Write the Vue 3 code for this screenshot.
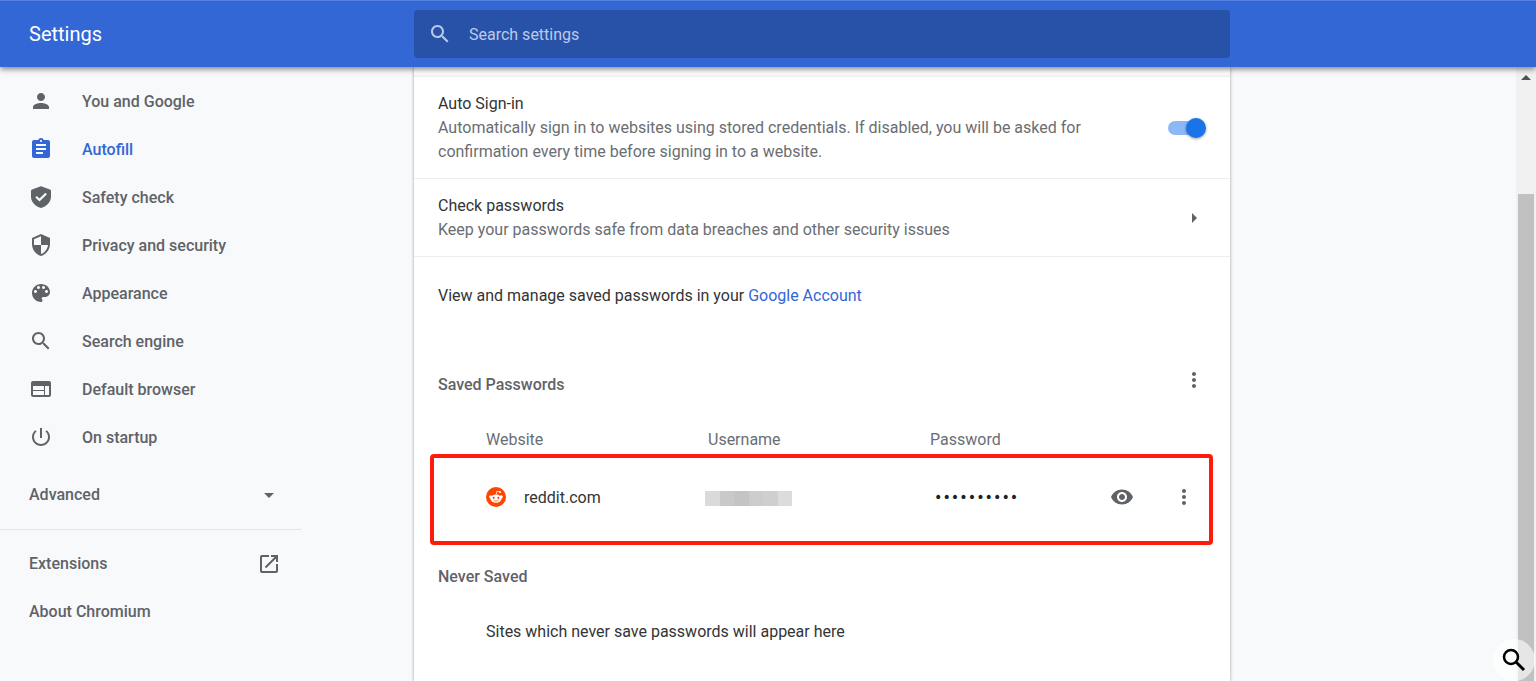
<script setup>
import { ref } from 'vue'

const query = ref('')
const autoSignIn = ref(true)
const password = ref('passw0rd12')

const menu = [
  { label: 'You and Google', icon: 'M12 12c2.21 0 4-1.79 4-4s-1.79-4-4-4-4 1.79-4 4 1.79 4 4 4zm0 2c-2.67 0-8 1.34-8 4v2h16v-2c0-2.66-5.33-4-8-4z' },
  { label: 'Autofill', active: true, icon: 'M19 3h-4.18C14.4 1.84 13.3 1 12 1c-1.3 0-2.4.84-2.82 2H5c-1.1 0-2 .9-2 2v14c0 1.1.9 2 2 2h14c1.1 0 2-.9 2-2V5c0-1.1-.9-2-2-2zm-7 0c.55 0 1 .45 1 1s-.45 1-1 1-1-.45-1-1 .45-1 1-1zm2 14H7v-2h7v2zm3-4H7v-2h10v2zm0-4H7V7h10v2z' },
  { label: 'Safety check', icon: 'M11.3 1.5 3 4.6C2.4 4.8 2 5.4 2 6v5.6c0 5.200 3.900 9.700 10 11.400 6.100-1.700 10-6.200 10-11.400V6c0-.6-.4-1.200-1-1.400l-8.300-3.100c-.5-.2-.9-.2-1.400 0zM10.500 16.600 6.300 12.400l1.500-1.500 2.700 2.700 5.900-5.900 1.500 1.500z' },
  { label: 'Privacy and security', icon: 'M12 1L3 5v6c0 5.550 3.840 10.740 9 12 5.160-1.260 9-6.450 9-12V5l-9-4zm0 10.990h7c-.53 4.120-3.280 7.790-7 8.940V12H5V6.300l7-3.110v8.800z' },
  { label: 'Appearance', icon: 'M12 3c-4.970 0-9 4.030-9 9s4.030 9 9 9c.83 0 1.500-.67 1.500-1.500 0-.39-.15-.74-.39-1.010-.23-.26-.38-.61-.38-.99 0-.83.67-1.500 1.500-1.500H16c2.760 0 5-2.240 5-5 0-4.420-4.030-8-9-8zm-5.500 9c-.83 0-1.500-.67-1.500-1.500S5.670 9 6.500 9 8 9.670 8 10.500 7.330 12 6.500 12zm3-4C8.670 8 8 7.330 8 6.500S8.670 5 9.500 5s1.500.67 1.500 1.500S10.330 8 9.500 8zm5 0c-.83 0-1.500-.67-1.500-1.500S13.670 5 14.500 5s1.500.67 1.500 1.500S15.330 8 14.500 8zm3 4c-.83 0-1.500-.67-1.500-1.500S16.670 9 17.500 9s1.500.67 1.500 1.500-.67 1.500-1.500 1.500z' },
  { label: 'Search engine', icon: 'M15.500 14h-.79l-.28-.27C15.410 12.590 16 11.110 16 9.500 16 5.910 13.090 3 9.500 3S3 5.910 3 9.500 5.910 16 9.500 16c1.610 0 3.090-.59 4.230-1.570l.27.28v.79l5 4.990L20.490 19l-4.990-5zm-6 0C7.010 14 5 11.990 5 9.500S7.010 5 9.500 5 14 7.010 14 9.500 11.990 14 9.500 14z' },
  { label: 'Default browser', icon: 'M20 4H4c-1.100 0-1.990.9-1.990 2L2 18c0 1.100.9 2 2 2h16c1.100 0 2-.9 2-2V6c0-1.100-.9-2-2-2zm-5 14H4v-4h11v4zm0-5H4V9h11v4zm5 5h-4V9h4v9z' },
  { label: 'On startup', icon: 'M13 3h-2v10h2V3zm4.830 2.170l-1.420 1.420C17.990 7.860 19 9.810 19 12c0 3.870-3.130 7-7 7s-7-3.130-7-7c0-2.190 1.010-4.140 2.580-5.420L6.170 5.170C4.230 6.820 3 9.260 3 12c0 4.970 4.030 9 9 9s9-4.030 9-9c0-2.740-1.230-5.180-3.170-6.830z' }
]
const searchPath = menu[5].icon
const dotsPath = 'M12 8c1.100 0 2-.9 2-2s-.9-2-2-2-2 .9-2 2 .9 2 2 2zm0 2c-1.100 0-2 .9-2 2s.9 2 2 2 2-.9 2-2-.9-2-2-2zm0 6c-1.100 0-2 .9-2 2s.9 2 2 2 2-.9 2-2-.9-2-2-2z'
</script>

<template>
  <div class="page">
    <header class="toolbar">
      <h1>Settings</h1>
      <label class="search">
        <svg class="icon" viewBox="0 0 24 24" aria-hidden="true"><path :d="searchPath" /></svg>
        <input v-model="query" type="text" placeholder="Search settings" aria-label="Search settings" />
      </label>
    </header>

    <div class="content">
      <aside class="sidebar">
        <nav>
          <a v-for="item in menu" :key="item.label" href="#" class="item" :class="{ active: item.active }">
            <svg class="icon" viewBox="0 0 24 24" aria-hidden="true"><path fill-rule="evenodd" :d="item.icon" /></svg>
            <span>{{ item.label }}</span>
          </a>
        </nav>
        <button type="button" class="item spread advanced">
          <span>Advanced</span>
          <svg class="icon" viewBox="0 0 24 24" aria-hidden="true"><path d="M7 10l5 5 5-5z" /></svg>
        </button>
        <div class="more">
          <a href="#" class="item spread">
            <span>Extensions</span>
            <svg class="icon" viewBox="0 0 24 24" aria-hidden="true"><path d="M19 19H5V5h7V3H5c-1.110 0-2 .9-2 2v14c0 1.100.89 2 2 2h14c1.100 0 2-.9 2-2v-7h-2v7zM14 3v2h3.590l-9.830 9.830 1.410 1.410L19 6.410V10h2V3h-7z" /></svg>
          </a>
          <a href="#" class="item">About Chromium</a>
        </div>
      </aside>

      <main class="card">
        <div class="row first">
          <label class="text" for="auto-signin">
            Auto Sign-in
            <span class="sub">Automatically sign in to websites using stored credentials. If disabled, you will be asked for confirmation every time before signing in to a website.</span>
          </label>
          <input id="auto-signin" v-model="autoSignIn" type="checkbox" class="toggle" />
        </div>
        <div class="row">
          <div class="text">
            Check passwords
            <span class="sub">Keep your passwords safe from data breaches and other security issues</span>
          </div>
          <button type="button" class="icon-button" aria-label="Check passwords">
            <svg class="icon" viewBox="0 0 24 24" aria-hidden="true"><path d="M10 7l5 5-5 5z" /></svg>
          </button>
        </div>
        <p class="manage">View and manage saved passwords in your <a href="#">Google Account</a></p>

        <div class="section-head">
          <h2>Saved Passwords</h2>
          <button type="button" class="icon-button" aria-label="More actions">
            <svg class="icon" viewBox="0 0 24 24" aria-hidden="true"><path :d="dotsPath" /></svg>
          </button>
        </div>

        <div class="saved">
          <table>
            <thead>
              <tr><th>Website</th><th>Username</th><th class="wide">Password</th></tr>
            </thead>
            <tbody>
              <tr>
                <td>
                  <div class="site">
                    <svg class="reddit" viewBox="0 0 20 20" aria-hidden="true">
                      <circle cx="10" cy="10" r="10" fill="#ff4500" />
                      <path d="M10.200 7.500 11 4.200l2.900.6" fill="none" stroke="#fff" stroke-width=".8" />
                      <circle cx="14" cy="5" r="1.100" fill="#fff" />
                      <circle cx="4.700" cy="9.800" r="1.500" fill="#fff" />
                      <circle cx="15.300" cy="9.800" r="1.500" fill="#fff" />
                      <ellipse cx="10" cy="11.600" rx="5.600" ry="4.200" fill="#fff" />
                      <circle cx="7.700" cy="10.800" r="1.100" fill="#ff4500" />
                      <circle cx="12.300" cy="10.800" r="1.100" fill="#ff4500" />
                      <path d="M7.700 13.400c1.300 1 3.300 1 4.600 0" fill="none" stroke="#ff4500" stroke-width=".7" stroke-linecap="round" />
                    </svg>
                    <span>reddit.com</span>
                  </div>
                </td>
                <td>
                  <div class="mosaic" role="img" aria-label="Hidden username"><i></i><i></i><i></i><i></i><i></i><i></i></div>
                </td>
                <td>
                  <div class="secret">
                    <input v-model="password" type="password" readonly aria-label="Password for reddit.com" />
                    <button type="button" class="icon-button" aria-label="Show password">
                      <svg class="icon" viewBox="0 0 24 24" aria-hidden="true"><path d="M12 4.500C7 4.500 2.730 7.610 1 12c1.730 4.390 6 7.500 11 7.500s9.270-3.110 11-7.500c-1.730-4.390-6-7.500-11-7.500zM12 17c-2.760 0-5-2.240-5-5s2.240-5 5-5 5 2.240 5 5-2.240 5-5 5zm0-8c-1.660 0-3 1.340-3 3s1.340 3 3 3 3-1.340 3-3-1.340-3-3-3z" /></svg>
                    </button>
                    <button type="button" class="icon-button" aria-label="More actions for reddit.com">
                      <svg class="icon" viewBox="0 0 24 24" aria-hidden="true"><path :d="dotsPath" /></svg>
                    </button>
                  </div>
                </td>
              </tr>
            </tbody>
          </table>
          <div class="highlight"></div>
        </div>

        <h2 class="never">Never Saved</h2>
        <p class="empty">Sites which never save passwords will appear here</p>
      </main>

      <div class="scrollbar" aria-hidden="true">
        <div class="arrow"></div>
        <div class="thumb"></div>
      </div>
    </div>

    <button type="button" class="lens" aria-label="Zoom">
      <svg viewBox="0 0 24 24" aria-hidden="true">
        <circle cx="9" cy="9" r="7" fill="none" stroke="#000" stroke-width="2.500" />
        <path d="M14 14l8 8" stroke="#000" stroke-width="3" />
      </svg>
    </button>
  </div>
</template>

<style>
body {
  margin: 0;
  background: #f8f9fb;
}
</style>

<style scoped>
.page {
  position: relative;
  display: flex;
  flex-direction: column;
  height: 100vh;
  overflow: hidden;
  font: 400 16px/24px Roboto, "Liberation Sans", sans-serif;
  color: #333436;
}
.page * {
  box-sizing: border-box;
}
h1, h2, p {
  margin: 0;
}
button, input {
  font: inherit;
  color: inherit;
  border: 0;
  padding: 0;
  background: none;
}
a {
  color: #3367d6;
  text-decoration: none;
}
.icon {
  flex: none;
  display: block;
  width: 24px;
  height: 24px;
  fill: currentColor;
}
.toolbar {
  position: relative;
  z-index: 1;
  display: grid;
  grid-template-columns: 414px minmax(0, 816px);
  align-items: center;
  padding: 9px 0;
  background: #3367d6;
  border-top: 1px solid #5480dd;
  box-shadow: 0 2px 6px rgba(0, 0, 0, 0.5);
  color: #fff;
}
h1 {
  padding-left: 29px;
  font-size: 20px;
  font-weight: 400;
}
.search {
  display: flex;
  align-items: center;
  gap: 17px;
  height: 48px;
  padding: 0 16px 0 14px;
  border-radius: 4px;
  background: #2851a8;
  color: #bccaea;
}
.search input {
  flex: 1;
  min-width: 0;
  padding-top: 2px;
  outline: 0;
}
.search input::placeholder {
  color: #bccaea;
  opacity: 1;
}
.content {
  flex: 1;
  min-height: 0;
  display: grid;
  grid-template-columns: 414px minmax(0, 816px) 1fr;
}
.sidebar {
  width: 301px;
  padding-top: 10px;
  color: #5f6368;
  font-weight: 500;
}
.item {
  display: flex;
  align-items: center;
  gap: 29px;
  width: 100%;
  height: 48px;
  padding: 0 20px 0 29px;
  color: #5f6368;
}
nav .item span {
  padding-top: 2px;
}
.item.active {
  color: #3367d6;
}
.spread {
  justify-content: space-between;
}
.advanced {
  margin: 10px 0;
}
.more {
  padding-top: 10px;
  border-top: 1px solid #e2e4e6;
}
.card {
  padding-top: 8px;
  background: #fff;
  box-shadow: 0 0 3px rgba(60, 64, 67, 0.5);
}
.row {
  display: flex;
  align-items: center;
  justify-content: space-between;
  padding: 15px 24px 14px;
  border-bottom: 1px solid #eee;
}
.first {
  border-top: 2px solid #f3f3f3;
}
.text {
  max-width: 660px;
}
.sub {
  display: block;
  color: #6a6e73;
}
.toggle {
  appearance: none;
  position: relative;
  flex: none;
  width: 34px;
  height: 14px;
  margin: 0 4px 0 0;
  border-radius: 7px;
  background: #dadce0;
}
.toggle::before {
  content: "";
  position: absolute;
  top: -3px;
  left: 0;
  width: 20px;
  height: 20px;
  border-radius: 50%;
  background: #fff;
  box-shadow: 0 1px 3px rgba(0, 0, 0, 0.4);
}
.toggle:checked {
  background: #8cb8f5;
}
.toggle:checked::before {
  left: 18px;
  background: #1a73e8;
}
.icon-button {
  flex: none;
  color: #5f6368;
}
.manage {
  padding: 27px 24px 28px;
}
.section-head {
  display: flex;
  justify-content: space-between;
  padding: 32px 24px 0;
}
.section-head .icon-button, .row .icon-button {
  height: 24px;
}
h2 {
  padding-top: 5px;
  font-size: 16px;
  font-weight: 500;
  color: #5f6368;
}
.saved {
  position: relative;
  padding: 31px 24px 0 72px;
}
.highlight {
  position: absolute;
  inset: 57px 17px 0 16px;
  border: 4px solid #ff1b0c;
  border-radius: 4px;
  pointer-events: none;
}
table {
  width: 100%;
  table-layout: fixed;
  border-collapse: collapse;
}
th, td {
  padding: 0;
  text-align: left;
}
th {
  height: 27px;
  vertical-align: top;
  font-weight: 400;
  color: #6a6e73;
}
.wide {
  width: 276px;
}
td {
  height: 90px;
  padding-bottom: 6px;
}
.site {
  display: flex;
  align-items: center;
  gap: 18px;
}
.site span {
  padding-top: 2px;
}
.reddit {
  width: 20px;
  height: 20px;
}
.mosaic {
  display: flex;
  width: 87px;
  height: 15px;
  margin: 2px 0 0 -3px;
}
.mosaic i {
  flex: 1;
  background: #dadada;
}
.mosaic i:nth-child(2) { background: #c9c9c9; }
.mosaic i:nth-child(3) { background: #c4c4c4; }
.mosaic i:nth-child(4) { background: #cbcdcb; }
.mosaic i:nth-child(5) { background: #cfcfcf; }
.mosaic i:nth-child(6) { background: #dcdcdc; }
.secret {
  display: flex;
  align-items: center;
  gap: 38px;
  padding-right: 10px;
}
.secret input {
  flex: 1;
  min-width: 0;
  padding-left: 4px;
  font: 14px/24px "DejaVu Sans Mono", monospace;
  color: #202124;
  outline: 0;
}
.never {
  padding: 20px 24px 0;
}
.empty {
  padding: 31px 24px 0 72px;
}
.scrollbar {
  display: flex;
  flex-direction: column;
  justify-self: end;
  width: 20px;
  padding: 8px 2px 0;
  background: #f1f1f1;
}
.arrow {
  align-self: center;
  border: 5px solid transparent;
  border-top: 0;
  border-bottom-color: #505050;
}
.thumb {
  flex: 1;
  margin-top: 114px;
  background: #c1c1c1;
}
.lens {
  position: absolute;
  right: 1px;
  bottom: 0;
  z-index: 2;
  display: grid;
  place-items: center;
  width: 42px;
  height: 42px;
  border-radius: 50%;
  background: rgba(255, 255, 255, 0.6);
}
.lens svg {
  width: 24px;
  height: 24px;
}
</style>
